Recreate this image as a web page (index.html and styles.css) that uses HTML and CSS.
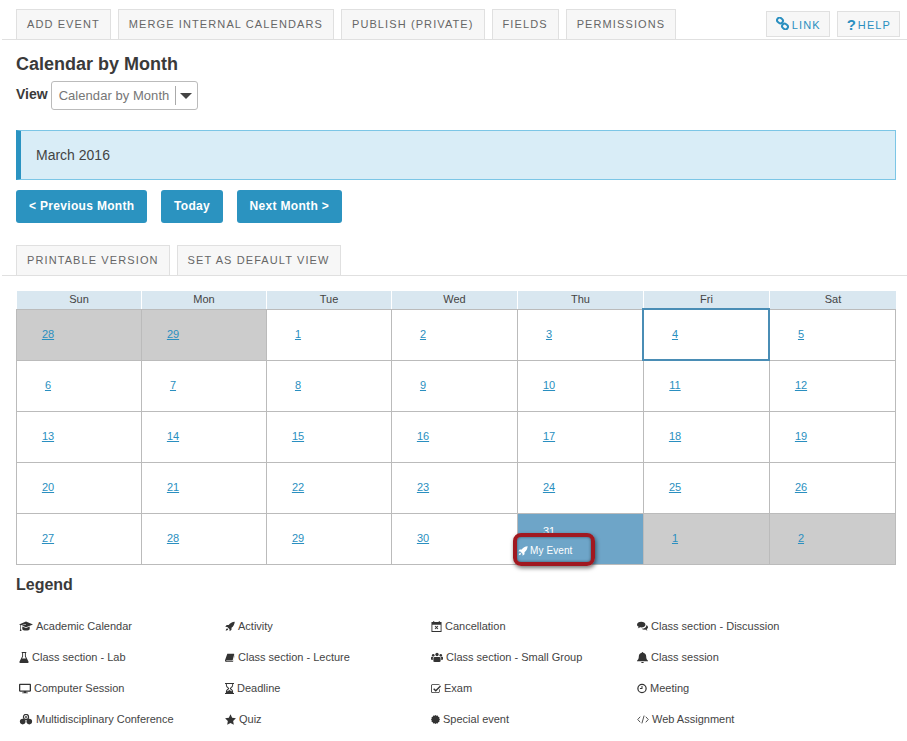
FILE: index.html
```html
<!DOCTYPE html>
<html lang="en">
<head>
<meta charset="utf-8">
<title>Calendar by Month</title>
<link rel="stylesheet" href="styles.css">
</head>
<body>
<nav class="toolbar">
  <a class="tab">ADD EVENT</a>
  <a class="tab">MERGE INTERNAL CALENDARS</a>
  <a class="tab">PUBLISH (PRIVATE)</a>
  <a class="tab">FIELDS</a>
  <a class="tab">PERMISSIONS</a>
  <div class="tools">
    <a class="tool"><svg class="tool-icon" viewBox="0 0 13 13"><g fill="none" stroke="#2a8fc0" stroke-width="2"><rect x="1" y="1" width="6" height="5" rx="2.4" transform="rotate(40 4 3.5)"/><rect x="6" y="7" width="6" height="5" rx="2.4" transform="rotate(40 9 9.5)"/></g></svg>LINK</a>
    <a class="tool"><span class="q">?</span>HELP</a>
  </div>
</nav>
<main class="content">
  <h1 class="title">Calendar by Month</h1>
  <div class="view-row">
    <span class="view-label">View</span>
    <div class="select"><span class="select-text">Calendar by Month</span><span class="select-arrow"><i class="caret"></i></span></div>
  </div>
  <div class="banner">March 2016</div>
  <div class="month-nav">
    <a class="btn">&lt; Previous Month</a>
    <a class="btn">Today</a>
    <a class="btn">Next Month &gt;</a>
  </div>
</main>
<nav class="toolbar sub">
  <a class="tab">PRINTABLE VERSION</a>
  <a class="tab">SET AS DEFAULT VIEW</a>
</nav>
<section class="calendar">
  <div class="dow">Sun</div><div class="dow">Mon</div><div class="dow">Tue</div><div class="dow">Wed</div><div class="dow">Thu</div><div class="dow">Fri</div><div class="dow">Sat</div>
  <div class="day off"><a>28</a></div><div class="day off"><a>29</a></div><div class="day"><a>1</a></div><div class="day"><a>2</a></div><div class="day"><a>3</a></div><div class="day now"><a>4</a></div><div class="day"><a>5</a></div>
  <div class="day"><a>6</a></div><div class="day"><a>7</a></div><div class="day"><a>8</a></div><div class="day"><a>9</a></div><div class="day"><a>10</a></div><div class="day"><a>11</a></div><div class="day"><a>12</a></div>
  <div class="day"><a>13</a></div><div class="day"><a>14</a></div><div class="day"><a>15</a></div><div class="day"><a>16</a></div><div class="day"><a>17</a></div><div class="day"><a>18</a></div><div class="day"><a>19</a></div>
  <div class="day"><a>20</a></div><div class="day"><a>21</a></div><div class="day"><a>22</a></div><div class="day"><a>23</a></div><div class="day"><a>24</a></div><div class="day"><a>25</a></div><div class="day"><a>26</a></div>
  <div class="day"><a>27</a></div><div class="day"><a>28</a></div><div class="day"><a>29</a></div><div class="day"><a>30</a></div>
  <div class="day event-day"><span class="num">31</span>
    <div class="event"><svg class="ev-icon" viewBox="0 0 12 12"><path fill="#fff" d="M11.6.4C8.6.6 6 2 4.4 4.200H2L.4 6.400l2.400.2L5.400 9.200l.2 2.400L7.800 10V7.600C10 6 11.400 3.400 11.600.4zM2.600 8.200C1.400 8.800 1 10 .9 11.100 2 11 3.200 10.600 3.800 9.400z"/></svg>My Event</div>
    <div class="callout"></div>
  </div>
  <div class="day off"><a>1</a></div><div class="day off"><a>2</a></div>
</section>
<h2 class="legend-title">Legend</h2>
<ul class="legend">
  <li><svg class="ic cap" viewBox="0 0 17 12"><path d="M8.500 0 17 3.500 8.500 7 3.400 4.900 8.600 3.600 8.300 3 2.400 4.500V9l.7 2.500H.9L1.600 9V4.200L0 3.500zM4 6l4.500 1.900L13 6v3c0 1.200-2.200 2-4.500 2S4 10.200 4 9z"/></svg>Academic Calendar</li>
  <li><svg class="ic tight" viewBox="0 0 12 12"><path d="M11.700.3C8.700.5 6 2 4.400 4.200H2L.3 6.400l2.500.2 2.600 2.600.2 2.500L7.800 10V7.600C10 6 11.500 3.300 11.700.3zM2.600 8.200C1.400 8.800 1 10 .9 11.100 2 11 3.200 10.600 3.800 9.400z"/></svg>Activity</li>
  <li><svg class="ic" viewBox="0 0 11 12"><path fill-rule="evenodd" d="M2 0h1v1h5V0h1v1h2v11H0V1h2zM1 4v7h9V4zm2.500 1.800.7-.7 1.300 1.300 1.300-1.300.7.700L6.200 7.100l1.300 1.300-.7.700-1.300-1.300-1.300 1.300-.7-.7 1.300-1.300z"/></svg>Cancellation</li>
  <li><svg class="ic" viewBox="0 0 13 11"><path d="M5 0c2.800 0 5 1.400 5 3.300S7.800 6.600 5 6.600c-.5 0-1 0-1.400-.1C2.800 7.200 1.800 7.600.8 7.700c.6-.6 1-1.300 1.100-2C.7 5.100 0 4.300 0 3.300 0 1.400 2.200 0 5 0zm6 4c1.200.5 2 1.300 2 2.400 0 .9-.6 1.700-1.600 2.200.1.700.5 1.200 1 1.700-1-.1-1.900-.5-2.600-1.200-.3.1-.7.1-1 .1-1.300 0-2.500-.4-3.300-1.100C9 8.100 11.200 6.500 11 4z"/></svg>Class section - Discussion</li>
  <li><svg class="ic flask" viewBox="0 0 10 12"><path fill-rule="evenodd" d="M2.500 0h5v1H7v3.500l3 6.200c.2.600-.1 1.300-.8 1.300H.8C.1 12-.2 11.300 0 10.700l3-6.200V1h-.5zM4 1v3.800L2.900 7h4.200L6 4.800V1z"/></svg>Class section - Lab</li>
  <li><svg class="ic tight" viewBox="0 0 13 12"><path d="M3 1h8.500c.4 0 .6.300.5.700L10 9.500c-.1.300-.4.500-.7.500H2c-.5 0-.7.300-.6.600.100.300.4.400.7.400h8.400c.2 0 .4-.2.500-.4L12.500 3l.2.800-2.100 7.500c-.1.400-.4.700-.8.700H2C.8 12 0 11 0 10V9.500z"/></svg>Class section - Lecture</li>
  <li><svg class="ic group" viewBox="0 0 15 12"><circle cx="7.500" cy="2.300" r="2.100"/><circle cx="2.800" cy="3.300" r="1.600"/><circle cx="12.200" cy="3.300" r="1.600"/><path d="M4.300 5.500h6.400c.9 0 1.300 1 1.300 2.200V10c0 1-.6 1.500-1.300 1.500H4.300C3.600 11.500 3 11 3 10V7.700c0-1.200.4-2.200 1.300-2.200zM0 6.200C0 5.400.4 5 1 5h2.200C2.500 5.600 2.200 6.600 2.200 7.800V9H1C.4 9 0 8.600 0 8zm15 0V8c0 .6-.4 1-1 1h-1.200V7.800c0-1.200-.3-2.200-1-2.800H14c.6 0 1 .4 1 1.200z"/></svg>Class section - Small Group</li>
  <li><svg class="ic" viewBox="0 0 12 12"><path d="M6 0c.5 0 .8.300.8.800C8.700 1.100 10 2.700 10 4.600c0 3 1 3.900 2 4.900v.7H0v-.7c1-1 2-1.900 2-4.900 0-1.900 1.300-3.500 3.200-3.800C5.200.3 5.500 0 6 0zM4.500 10.800h3C7.500 11.500 6.800 12 6 12s-1.500-.5-1.500-1.200z"/></svg>Class session</li>
  <li><svg class="ic screen" viewBox="0 0 14 11"><path fill-rule="evenodd" d="M1 0h12c.6 0 1 .4 1 1v7.200c0 .6-.4 1-1 1H8.500v.9h1.800v.9H3.700v-.9h1.800v-.9H1c-.6 0-1-.4-1-1V1c0-.6.4-1 1-1zm.5 1.500V7.700h11V1.500z"/></svg>Computer Session</li>
  <li><svg class="ic glass" viewBox="0 0 10 12"><path fill-rule="evenodd" d="M0 0h10v1H9v1.500C9 4.200 7.600 5.300 6.500 6 7.600 6.700 9 7.800 9 9.500V11h1v1H0v-1h1V9.500C1 7.800 2.400 6.700 3.500 6 2.400 5.300 1 4.200 1 2.500V1H0zm2 1v1.500C2 3.800 3.700 4.900 4.500 5.500v1C3.700 7 2.500 7.800 2.200 9.200L5 7.800l2.800 1.400C7.500 7.800 6.300 7 5.500 6.500v-1C6.300 4.900 8 3.800 8 2.500V1z"/></svg>Deadline</li>
  <li><svg class="ic tight" viewBox="0 0 13 12"><path fill-rule="evenodd" d="M2 .5h7.600c.7 0 1.400.3 1.900.7l-.8.8c-.3-.3-.7-.4-1.100-.4H2c-.5 0-.9.400-.9.900V10c0 .500.4.900.9.900h7.500c.5 0 .9-.4.9-.9V7.500l1-1V10c0 1.100-.9 2-1.900 2H2c-1.100 0-2-.9-2-2V2.500C0 1.400.9.500 2 .5zm9.800 1.600 1.200 1.300-6.800 6.900L2.800 6.900l1.300-1.300 2.100 2.100z"/></svg>Exam</li>
  <li><svg class="ic tight" viewBox="0 0 12 12"><path fill-rule="evenodd" d="M6 .3a5.700 5.700 0 1 1 0 11.400A5.700 5.700 0 0 1 6 .3zm0 1.500a4.200 4.200 0 1 0 0 8.400 4.200 4.200 0 0 0 0-8.400zM5.400 3h1.200v3.600H3.500V5.400h1.900z"/></svg>Meeting</li>
  <li><svg class="ic atom" viewBox="0 0 15 13"><circle cx="7.500" cy="3.500" r="3" fill="none" stroke="#333" stroke-width="1.500"/><circle cx="3.600" cy="9" r="3.300"/><circle cx="11.400" cy="9" r="3.300"/><circle cx="7.500" cy="3.500" r="1.100"/></svg>Multidisciplinary Conference</li>
  <li><svg class="ic" viewBox="0 0 12 12"><path d="M6 .3l1.800 3.800 4.100.6-3 2.900.7 4.100L6 9.800l-3.600 1.900.7-4.100-3-2.900 4.100-.6z"/></svg>Quiz</li>
  <li><svg class="ic burst" viewBox="0 0 12 12"><path d="M6 0l1.300 1.100L9 .8l.7 1.500 1.600.7-.3 1.700L12 6l-1 1.300.3 1.700-1.600.7L9 11.200l-1.700-.3L6 12l-1.300-1.100-1.700.3-.7-1.500-1.600-.7.300-1.700L0 6l1-1.300L.7 3l1.600-.7L3 .8l1.700.3z"/></svg>Special event</li>
  <li><svg class="ic code" viewBox="0 0 13 10"><path fill="none" stroke="#444" d="M3.500 2 .8 5l2.700 3M9.500 2l2.700 3-2.700 3M7.700.8 5.300 9.200"/></svg>Web Assignment</li>
</ul>
</body>
</html>
```
FILE: styles.css
```css
* { box-sizing: border-box; }
html, body { margin: 0; padding: 0; }
body {
  width: 907px;
  height: 741px;
  overflow: hidden;
  background: #fff;
  color: #333;
  font-family: "Liberation Sans", Arial, sans-serif;
  font-size: 14px;
}
.toolbar {
  display: flex;
  align-items: flex-end;
  gap: 7px;
  margin: 9px 0 0 2px;
  padding-left: 14px;
  border-bottom: 1px solid #e0e0e0;
  height: 31px;
}
.tab {
  height: 30px;
  padding: 0 10px 1px;
  display: flex;
  align-items: center;
  background: #f7f7f7;
  border: 1px solid #e0e0e0;
  border-bottom: 0;
  color: #666;
  font-size: 11px;
  letter-spacing: 1.1px;
  white-space: nowrap;
}
.tools {
  display: flex;
  gap: 7px;
  margin-left: auto;
  margin-right: 7px;
  margin-bottom: 2px;
}
.tool {
  height: 26px;
  padding: 1px 8px 0 9px;
  display: flex;
  align-items: center;
  background: #f7f7f7;
  border: 1px solid #e0e0e0;
  color: #2a8fc0;
  font-size: 11px;
  letter-spacing: 1.1px;
}
.tool-icon { width: 13px; height: 13px; margin-right: 3px; margin-top: -2px; }
.q { font-size: 15px; font-weight: bold; margin-right: 2px; letter-spacing: 0; }
.content { padding: 0 11px 0 16px; }
.title { margin: 14px 0 0; font-size: 18px; line-height: 20px; font-weight: bold; color: #3a3a3a; }
.view-row { display: flex; align-items: center; gap: 3px; margin-top: 7px; }
.view-label { font-weight: bold; font-size: 14px; margin-top: -3px; color: #3a3a3a; }
.select {
  width: 147px;
  height: 29px;
  display: flex;
  align-items: center;
  border: 1px solid #bbb;
  border-radius: 3px;
  color: #767676;
  padding-left: 7px;
}
.select-text { white-space: nowrap; width: 116px; font-size: 13px; letter-spacing: 0.05px; }
.select-arrow { height: 19px; border-left: 1px solid #aaa; padding-left: 4px; display: flex; align-items: center; }
.caret { width: 0; height: 0; border-left: 6px solid transparent; border-right: 6px solid transparent; border-top: 6px solid #444; }
.banner {
  margin-top: 20px;
  height: 50px;
  line-height: 48px;
  padding-left: 15px;
  background: #d9edf7;
  border: 1px solid #7cc6e6;
  border-left: 5px solid #2a93c1;
  font-size: 14px;
  color: #444;
}
.month-nav { display: flex; gap: 13.500px; margin-top: 10px; }
.btn {
  height: 33px;
  line-height: 32px;
  padding: 0 13px;
  background: #2b93c0;
  border-radius: 3px;
  color: #fff;
  font-size: 12px;
  font-weight: bold;
  letter-spacing: 0.32px;
  white-space: nowrap;
}
.toolbar.sub { margin-top: 22px; }
.calendar {
  display: grid;
  grid-template-columns: 125px 125px 125px 126px 126px 126px 127px;
  grid-template-rows: 18px repeat(4, 51px) 52px;
  margin: 15px 0 0 16px;
  width: 880px;
}
.dow {
  background: #d9e7f0;
  border-left: 1px solid #fff;
  text-align: center;
  font-size: 11px;
  line-height: 17px;
  color: #444;
}
.day {
  position: relative;
  background: #fff;
  border-left: 1px solid #bbb;
  border-top: 1px solid #bbb;
  font-size: 11px;
  padding-top: 18px;
}
.day:nth-child(7n) { border-right: 1px solid #bbb; }
.day:nth-last-child(-n+7) { border-bottom: 1px solid #bbb; }
.day a { display: block; width: 62px; text-align: center; color: #2a8fc0; text-decoration: underline; }
.off { background: #ccc; }
.now { outline: 2px solid #4a8db5; outline-offset: -1px; z-index: 1; }
.event-day { background: #6ea5c8; padding-top: 11px; color: #fff; }
.num { display: block; width: 62px; text-align: center; color: #fff; font-size: 11px; line-height: 12px; }
.event {
  position: absolute;
  left: -1px;
  top: 25px;
  width: 73px;
  height: 23px;
  display: flex;
  align-items: center;
  background: #6ea5c8;
  color: #fff;
  font-size: 10px;
  letter-spacing: 0.1px;
  padding-left: 1px;
  white-space: nowrap;
}
.ev-icon { width: 10px; height: 10px; margin-right: 2px; }
.callout {
  position: absolute;
  left: -5px;
  top: 19px;
  width: 82px;
  height: 33px;
  border: 4px solid #a01820;
  border-radius: 8px;
  box-shadow: 1px 2px 4px rgba(0, 0, 0, 0.55), inset 0 0 3px rgba(0, 0, 0, 0.5);
  z-index: 2;
}
.legend-title { margin: 11px 0 0 16px; font-size: 16px; line-height: 18px; font-weight: bold; color: #3a3a3a; }
.legend {
  list-style: none;
  margin: 25px 0 0 19px;
  padding: 0;
  display: grid;
  grid-template-columns: repeat(4, 206px);
  grid-auto-rows: 31px;
}
.legend li {
  display: flex;
  align-items: center;
  height: 14px;
  font-size: 11px;
  color: #444;
  white-space: nowrap;
}
.ic { width: 11px; height: 11px; margin-right: 3px; fill: #333; flex: none; }
.tight { width: 10px; }
.cap { width: 14px; }
.flask { width: 10px; }
.group { width: 12px; }
.screen { width: 12px; }
.glass { width: 9px; }
.atom { width: 14px; margin-right: 3px; }
.burst { width: 9px; }
.code { width: 12px; }
```
